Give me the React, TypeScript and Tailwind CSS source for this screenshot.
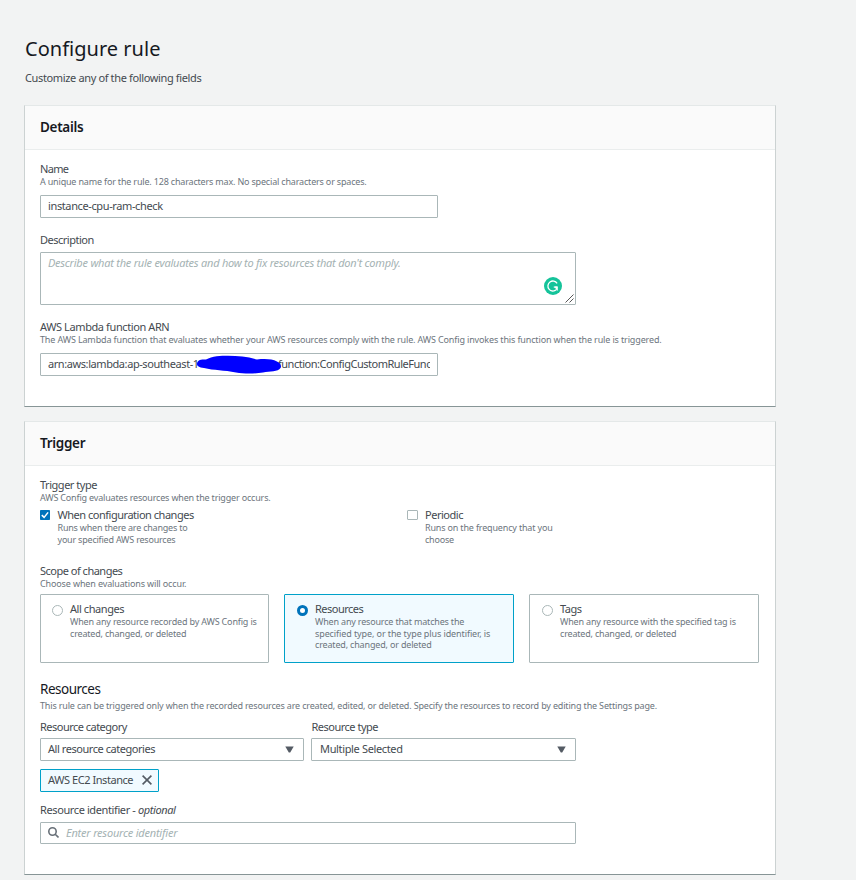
import type { ReactNode } from 'react';

function Label({ children, className = '' }: { children: ReactNode; className?: string }) {
  return (
    <div className={`h-4 text-[11px] leading-4 whitespace-nowrap text-[#444a50] ${className}`}>{children}</div>
  );
}

function Hint({ children, className = '' }: { children: ReactNode; className?: string }) {
  return (
    <div className={`text-[9px] leading-[11.5px] whitespace-nowrap text-[#6c757d] ${className}`}>{children}</div>
  );
}

function Panel({ title, titleClass, className, children }: { title: string; titleClass: string; className: string; children: ReactNode }) {
  return (
    <section className={`flex w-[752px] flex-col border border-t-[#e4e8e8] border-r-[#ccd2d2] border-b-[#879596] border-l-[#ccd2d2] bg-white ${className}`}>
      <header className="flex h-11 shrink-0 items-center border-b border-[#eaeded] bg-[#fafafa] pb-0.5 pl-[15px]">
        <h2 className={`text-[13.5px] leading-5 font-semibold text-[#16191f] ${titleClass}`}>{title}</h2>
      </header>
      <div className="flex flex-col px-[15px] pt-[11px]">{children}</div>
    </section>
  );
}

function Radio({ on = false }: { on?: boolean }) {
  return on ? (
    <span className="mt-1 size-[11px] shrink-0 rounded-full border-[3.5px] border-[#0073bb] bg-white" />
  ) : (
    <span className="mt-1 size-[11px] shrink-0 rounded-full border border-[#aab7b8] bg-white" />
  );
}

function Tile({ on = false, title, titleClass, className, children }: { on?: boolean; title: string; titleClass: string; className: string; children: ReactNode }) {
  return (
    <div className={`flex h-[69px] gap-[7px] rounded-[1px] border pt-1.5 ${className} ${on ? 'border-[#00a1c9] bg-[#f1faff]' : 'border-[#aab7b8] bg-white'}`}>
      <Radio on={on} />
      <div>
        <Label className={titleClass}>{title}</Label>
        <div className="-mt-[0.6px]">{children}</div>
      </div>
    </div>
  );
}

function Select({ width, value, className }: { width: string; value: string; className: string }) {
  return (
    <div className={`flex h-[23px] items-center justify-between rounded-[1px] border border-[#aab7b8] pr-[9.5px] text-[11px] text-[#444a50] ${width}`}>
      <span className={className}>{value}</span>
      <svg width="9" height="7" viewBox="0 0 9 7" fill="#545b64">
        <path d="M.3.5h8.4L5.2 6.6H3.8z" />
      </svg>
    </div>
  );
}

export default function App() {
  return (
    <main className="h-[880px] w-[856px] overflow-hidden bg-[#f2f3f3] pt-[35px] pl-6 font-['Noto_Sans',sans-serif]">
      <h1 className="ml-px h-7 text-[20px] leading-7 whitespace-nowrap text-[#16191f]">
        <span className="tracking-[0.02px]">Configure rule</span>
      </h1>
      <p className="mt-[7px] ml-px h-4 text-[11px] leading-4 tracking-[-0.36px] whitespace-nowrap text-[#444a50]">Customize any of the following fields</p>

      <Panel title="Details" titleClass="tracking-[-0.3px]" className="mt-[19px] h-[302px]">
        <Label className="tracking-[-0.7px]">Name</Label>
        <Hint className="-mt-[0.6px] tracking-[-0.18px]">A unique name for the rule. 128 characters max. No special characters or spaces.</Hint>
        <div className="mt-[7.1px] flex h-[23px] w-[398px] items-center rounded-[1px] border border-[#aab7b8] pl-[7px] text-[11px] text-[#444a50]">
          <span className="tracking-[-0.38px]">instance-cpu-ram-check</span>
        </div>

        <Label className="mt-3.5 tracking-[-0.5px]">Description</Label>
        <div className="relative mt-1 h-[53px] w-[536px] rounded-[1px] border border-[#aab7b8] pt-0.5 pl-[7px] text-[11px] leading-4 text-[#a4b2b3] italic">
          <span className="tracking-[-0.235px]">Describe what the rule evaluates and how to fix resources that don't comply.</span>
          <svg className="absolute top-6 left-[503px]" width="18" height="18" viewBox="0 0 18 18" fill="none">
            <circle cx="9" cy="9" r="9" fill="#15c39a" />
            <path d="M13.1 6.3A5 5 0 1 0 12.2 12.8M9.8 10.2h3.5" stroke="white" strokeWidth="1.3" />
            <path d="M10.6 9.6h3.2v4.2l-1.4-.9z" fill="white" />
          </svg>
          <svg className="absolute right-px bottom-px" width="9" height="9" viewBox="0 0 9 9" stroke="#444" strokeWidth=".9">
            <path d="M.5 8.5l8-8M4.5 8.5l4-4" />
          </svg>
        </div>

        <Label className="mt-3.5 tracking-[-0.4px]">AWS Lambda function ARN</Label>
        <Hint className="-mt-[0.6px] tracking-[-0.142px]">The AWS Lambda function that evaluates whether your AWS resources comply with the rule. AWS Config invokes this function when the rule is triggered.</Hint>
        <div className="relative mt-[7.1px] flex h-[23px] w-[398px] items-center rounded-[1px] border border-[#aab7b8] px-[7px] text-[11px] text-[#444a50]">
          <div className="flex w-[382px] overflow-hidden whitespace-nowrap">
            <span className="w-[230px] shrink-0 tracking-[-0.42px]">arn:aws:lambda:ap-southeast-1</span>
            <span className="tracking-[-0.48px]">function:ConfigCustomRuleFunc</span>
          </div>
          <svg className="absolute top-px left-[156px]" width="85" height="20" viewBox="0 0 85 20" fill="#0000ff">
            <path d="M0 9C0 5 4 4 9 4.500 15 1 24 .7 31 .7c10 0 20 1 29 3.800 8-.9 15-.6 20 2 3 1.500 5 4 3.500 6.500C81 17 73 16 66 17.500c-8 1.400-19 1.500-27 0C27 15 17 15.500 7 13 2 12.500 0 11 0 9z" />
          </svg>
        </div>
      </Panel>

      <Panel title="Trigger" titleClass="tracking-[-0.3px]" className="mt-3.5 h-[454px]">
        <Label className="tracking-[-0.47px]">Trigger type</Label>
        <Hint className="-mt-[0.6px] tracking-[-0.18px]">AWS Config evaluates resources when the trigger occurs.</Hint>
        <div className="mt-[3.1px] flex">
          <div className="flex w-[367px] gap-[7.5px]">
            <svg className="mt-[3px]" width="10" height="10" viewBox="0 0 10 10" fill="none">
              <rect width="10" height="10" rx=".7" fill="#0073bb" />
              <path d="M1.8 5.1l2.3 2.3 4-5" stroke="white" strokeWidth="1.5" />
            </svg>
            <div>
              <Label className="tracking-[-0.48px]">When configuration changes</Label>
              <Hint className="-mt-[0.6px] tracking-[-0.21px]">Runs when there are changes to</Hint>
              <Hint className="tracking-[-0.21px]">your specified AWS resources</Hint>
            </div>
          </div>
          <div className="flex gap-[7px]">
            <span className="mt-[3px] h-[10px] w-[11px] rounded-[1px] border border-[#aab7b8]" />
            <div>
              <Label className="tracking-[-0.47px]">Periodic</Label>
              <Hint className="-mt-[0.6px] tracking-[-0.17px]">Runs on the frequency that you</Hint>
              <Hint className="tracking-[-0.2px]">choose</Hint>
            </div>
          </div>
        </div>

        <Label className="mt-[17.6px] tracking-[-0.5px]">Scope of changes</Label>
        <Hint className="-mt-[0.6px] tracking-[-0.13px]">Choose when evaluations will occur.</Hint>
        <div className="mt-[4.1px] grid w-[719px] grid-cols-[229px_230px_230px] gap-[15px]">
          <Tile title="All changes" titleClass="tracking-[-0.43px]" className="pl-[11px]">
            <Hint className="tracking-[-0.17px]">When any resource recorded by AWS Config is</Hint>
            <Hint className="tracking-[-0.18px]">created, changed, or deleted</Hint>
          </Tile>
          <Tile on title="Resources" titleClass="tracking-[-0.5px]" className="pl-3">
            <Hint className="tracking-[-0.18px]">When any resource that matches the</Hint>
            <Hint className="tracking-[-0.1px]">specified type, or the type plus identifier, is</Hint>
            <Hint className="tracking-[-0.17px]">created, changed, or deleted</Hint>
          </Tile>
          <Tile title="Tags" titleClass="tracking-[-0.5px]" className="pl-3">
            <Hint className="tracking-[-0.17px]">When any resource with the specified tag is</Hint>
            <Hint className="tracking-[-0.18px]">created, changed, or deleted</Hint>
          </Tile>
        </div>

        <h3 className="mt-[17px] h-[18px] text-[13.5px] leading-[18px] text-[#16191f]">
          <span className="tracking-[-0.5px]">Resources</span>
        </h3>
        <Hint className="mt-[1.9px] tracking-[-0.165px]">This rule can be triggered only when the recorded resources are created, edited, or deleted. Specify the resources to record by editing the Settings page.</Hint>
        <div className="mt-[7.6px] flex gap-[7px]">
          <div className="flex flex-col gap-[3px]">
            <Label className="tracking-[-0.52px]">Resource category</Label>
            <Select width="w-[264px] pl-[7px]" value="All resource categories" className="tracking-[-0.45px]" />
          </div>
          <div className="flex flex-col gap-[3px]">
            <Label className="pl-[0.5px] tracking-[-0.5px]">Resource type</Label>
            <Select width="w-[265px] pl-2" value="Multiple Selected" className="tracking-[-0.35px]" />
          </div>
        </div>
        <div className="mt-2 flex h-[23px] w-[119px] items-center justify-between rounded-[1px] border border-[#00a1c9] bg-[#f1faff] pr-1.5 pl-[7px] text-[11px] text-[#444a50]">
          <span className="tracking-[-0.44px] whitespace-nowrap">AWS EC2 Instance</span>
          <svg width="10" height="10" viewBox="0 0 10 10" stroke="#545b64" strokeWidth="1.6">
            <path d="M.6.6l8.8 8.8M9.4.6L.6 9.4" />
          </svg>
        </div>
        <Label className="mt-2.5 tracking-[-0.39px]">
          Resource identifier - <i>optional</i>
        </Label>
        <div className="mt-1 flex h-[22px] w-[536px] items-center gap-[7px] rounded-[1px] border border-[#aab7b8] pl-[7px] text-[11px] text-[#a4b2b3] italic">
          <svg width="11" height="11" viewBox="0 0 11 11" fill="none" stroke="#687078" strokeWidth="1.6">
            <circle cx="4.5" cy="4.5" r="3.7" />
            <path d="M7.2 7.2l3.3 3.3" />
          </svg>
          <span className="tracking-[-0.21px]">Enter resource identifier</span>
        </div>
      </Panel>
    </main>
  );
}
